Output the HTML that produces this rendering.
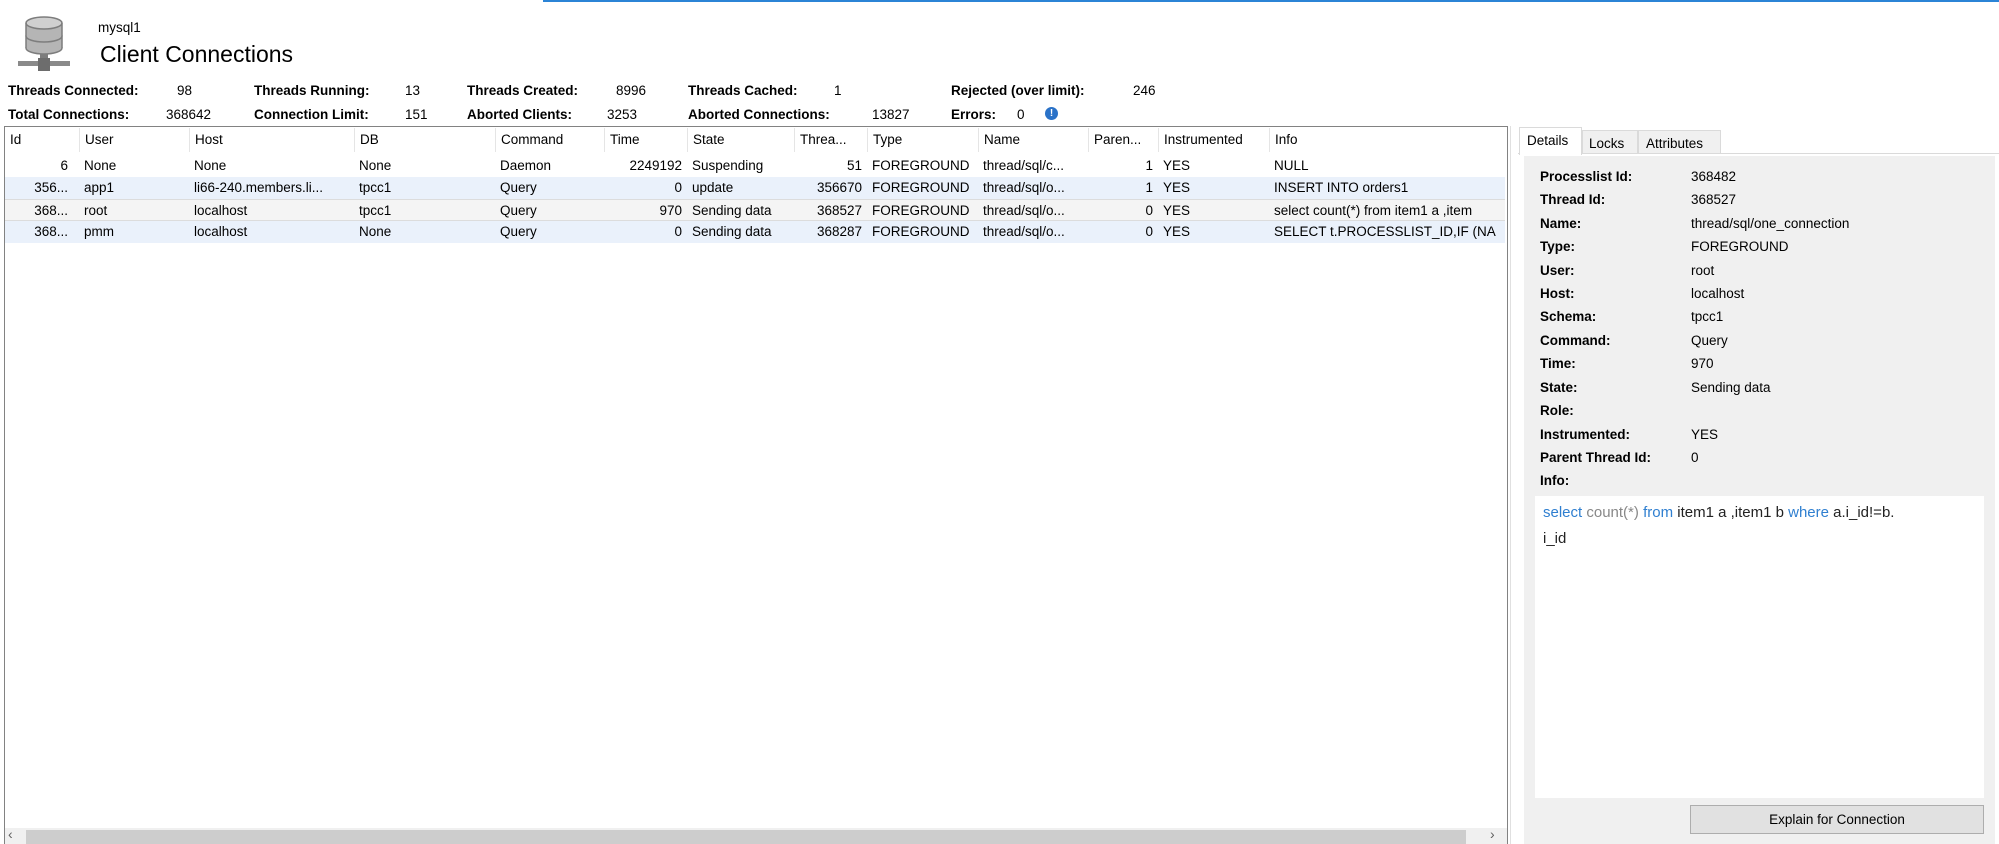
<!DOCTYPE html>
<html><head><meta charset="utf-8"><style>
*{margin:0;padding:0;box-sizing:border-box}
body{width:1999px;height:844px;background:#fff;font-family:"Liberation Sans",sans-serif;font-size:13.5px;color:#000;position:relative;overflow:hidden}
.a{position:absolute;white-space:nowrap}
.b{font-weight:bold}
.hdr span,.row span{position:absolute;top:0;line-height:22px}
.hdr{position:absolute;left:5px;top:128px;width:1500px;height:24px}
.hdr span{line-height:24px;padding-left:5px;border-left:1px solid #e5e5e5}
.row{position:absolute;left:5px;width:1500px;height:22px}
.r{text-align:right}
.lbl{position:absolute;left:1540px;font-weight:bold}
.val{position:absolute;left:1691px}
</style></head><body>
<div class="a" style="left:543px;top:0;width:1456px;height:2px;background:#2b84d6"></div>
<svg class="a" style="left:16px;top:14px" width="58" height="58" viewBox="0 0 58 58">
<g fill="#b5b5b5" stroke="#7d7d7d" stroke-width="1.5">
<ellipse cx="28" cy="34" rx="18" ry="6"/><rect x="10" y="22" width="36" height="12" stroke="none"/>
<ellipse cx="28" cy="22" rx="18" ry="6"/><rect x="10" y="9" width="36" height="13" stroke="none"/>
<ellipse cx="28" cy="9" rx="18" ry="6" fill="#d0d0d0"/></g>
<path d="M10 9v25M46 9v25" stroke="#7d7d7d" stroke-width="1.5"/>
<rect x="24" y="40" width="8" height="8" fill="#7d7d7d"/><rect x="2" y="47" width="52" height="5" fill="#8a8a8a"/><rect x="22" y="44" width="12" height="13" fill="#6d6d6d"/>
</svg>
<div class="a" style="left:98px;top:20px;font-size:13.5px">mysql1</div>
<div class="a" style="left:100px;top:41px;font-size:23px">Client Connections</div>

<div class="a b" style="left:8px;top:83px">Threads Connected:</div><div class="a" style="left:177px;top:83px">98</div>
<div class="a b" style="left:254px;top:83px">Threads Running:</div><div class="a" style="left:405px;top:83px">13</div>
<div class="a b" style="left:467px;top:83px">Threads Created:</div><div class="a" style="left:616px;top:83px">8996</div>
<div class="a b" style="left:688px;top:83px">Threads Cached:</div><div class="a" style="left:834px;top:83px">1</div>
<div class="a b" style="left:951px;top:83px">Rejected (over limit):</div><div class="a" style="left:1133px;top:83px">246</div>
<div class="a b" style="left:8px;top:107px">Total Connections:</div><div class="a" style="left:166px;top:107px">368642</div>
<div class="a b" style="left:254px;top:107px">Connection Limit:</div><div class="a" style="left:405px;top:107px">151</div>
<div class="a b" style="left:467px;top:107px">Aborted Clients:</div><div class="a" style="left:607px;top:107px">3253</div>
<div class="a b" style="left:688px;top:107px">Aborted Connections:</div><div class="a" style="left:872px;top:107px">13827</div>
<div class="a b" style="left:951px;top:107px">Errors:</div><div class="a" style="left:1017px;top:107px">0</div>
<div class="a" style="left:1045px;top:107px;width:13px;height:13px;border-radius:50%;background:#2a72c8;color:#fff;font-size:10px;font-weight:bold;text-align:center;line-height:13px">!</div>

<div class="a" style="left:4px;top:126px;width:1504px;height:718px;border:1px solid #828282;border-bottom:none"></div>
<div class="hdr">
<span style="left:0;border:none">Id</span><span style="left:74px">User</span><span style="left:184px">Host</span><span style="left:349px">DB</span><span style="left:490px">Command</span><span style="left:599px">Time</span><span style="left:682px">State</span><span style="left:789px">Threa...</span><span style="left:862px">Type</span><span style="left:973px">Name</span><span style="left:1083px">Paren...</span><span style="left:1153px">Instrumented</span><span style="left:1264px">Info</span>
</div>
<div class="row" style="top:155px">
<span class="r" style="left:0;width:63px">6</span><span style="left:79px">None</span><span style="left:189px">None</span><span style="left:354px">None</span><span style="left:495px">Daemon</span><span class="r" style="left:599px;width:78px">2249192</span><span style="left:687px">Suspending</span><span class="r" style="left:789px;width:68px">51</span><span style="left:867px">FOREGROUND</span><span style="left:978px">thread/sql/c...</span><span class="r" style="left:1083px;width:65px">1</span><span style="left:1158px">YES</span><span style="left:1269px">NULL</span>
</div>
<div class="row" style="top:177px;background:#eaf1fb">
<span class="r" style="left:0;width:63px">356...</span><span style="left:79px">app1</span><span style="left:189px">li66-240.members.li...</span><span style="left:354px">tpcc1</span><span style="left:495px">Query</span><span class="r" style="left:599px;width:78px">0</span><span style="left:687px">update</span><span class="r" style="left:789px;width:68px">356670</span><span style="left:867px">FOREGROUND</span><span style="left:978px">thread/sql/o...</span><span class="r" style="left:1083px;width:65px">1</span><span style="left:1158px">YES</span><span style="left:1269px">INSERT INTO orders1</span>
</div>
<div class="row" style="top:199px;background:#f4f4f4;border-top:1px solid #dcdcdc;border-bottom:1px solid #dcdcdc">
<span class="r" style="left:0;width:63px">368...</span><span style="left:79px">root</span><span style="left:189px">localhost</span><span style="left:354px">tpcc1</span><span style="left:495px">Query</span><span class="r" style="left:599px;width:78px">970</span><span style="left:687px">Sending data</span><span class="r" style="left:789px;width:68px">368527</span><span style="left:867px">FOREGROUND</span><span style="left:978px">thread/sql/o...</span><span class="r" style="left:1083px;width:65px">0</span><span style="left:1158px">YES</span><span style="left:1269px">select count(*) from item1 a ,item</span>
</div>
<div class="row" style="top:221px;background:#eaf1fb">
<span class="r" style="left:0;width:63px">368...</span><span style="left:79px">pmm</span><span style="left:189px">localhost</span><span style="left:354px">None</span><span style="left:495px">Query</span><span class="r" style="left:599px;width:78px">0</span><span style="left:687px">Sending data</span><span class="r" style="left:789px;width:68px">368287</span><span style="left:867px">FOREGROUND</span><span style="left:978px">thread/sql/o...</span><span class="r" style="left:1083px;width:65px">0</span><span style="left:1158px">YES</span><span style="left:1269px">SELECT t.PROCESSLIST_ID,IF (NA</span>
</div>
<div class="a" style="left:5px;top:828px;width:1502px;height:16px;background:#f0f0f0"></div>
<div class="a" style="left:26px;top:830px;width:1440px;height:14px;background:#cdcdcd"></div>
<div class="a" style="left:8px;top:826px;color:#606060;font-size:14px">‹</div>
<div class="a" style="left:1490px;top:826px;color:#606060;font-size:14px">›</div>

<div class="a" style="left:1510px;top:126px;width:1px;height:718px;background:#e0e0e0"></div>
<div class="a" style="left:1518px;top:153px;width:481px;height:691px;background:#fff;border-top:1px solid #dadada"></div>
<div class="a" style="left:1524px;top:156px;width:471px;height:688px;background:#f0f0f0"></div>
<div class="a" style="left:1519px;top:127px;width:63px;height:28px;background:#fff;border:1px solid #dadada;border-bottom:none;padding:5px 0 0 7px">Details</div>
<div class="a" style="left:1582px;top:130px;width:56px;height:24px;background:#f0f0f0;border:1px solid #dadada;padding:5px 0 0 6px">Locks</div>
<div class="a" style="left:1638px;top:130px;width:83px;height:24px;background:#f0f0f0;border:1px solid #dadada;padding:5px 0 0 7px">Attributes</div>

<div class="lbl" style="top:169px">Processlist Id:</div><div class="val" style="top:169px">368482</div>
<div class="lbl" style="top:192px">Thread Id:</div><div class="val" style="top:192px">368527</div>
<div class="lbl" style="top:216px">Name:</div><div class="val" style="top:216px">thread/sql/one_connection</div>
<div class="lbl" style="top:239px">Type:</div><div class="val" style="top:239px">FOREGROUND</div>
<div class="lbl" style="top:263px">User:</div><div class="val" style="top:263px">root</div>
<div class="lbl" style="top:286px">Host:</div><div class="val" style="top:286px">localhost</div>
<div class="lbl" style="top:309px">Schema:</div><div class="val" style="top:309px">tpcc1</div>
<div class="lbl" style="top:333px">Command:</div><div class="val" style="top:333px">Query</div>
<div class="lbl" style="top:356px">Time:</div><div class="val" style="top:356px">970</div>
<div class="lbl" style="top:380px">State:</div><div class="val" style="top:380px">Sending data</div>
<div class="lbl" style="top:403px">Role:</div>
<div class="lbl" style="top:427px">Instrumented:</div><div class="val" style="top:427px">YES</div>
<div class="lbl" style="top:450px">Parent Thread Id:</div><div class="val" style="top:450px">0</div>
<div class="lbl" style="top:473px">Info:</div>
<div class="a" style="left:1535px;top:496px;width:449px;height:302px;background:#fff;padding:4px 8px;font-size:15px;line-height:26px;white-space:normal;color:#222"><span style="color:#2f7fd0">select</span> <span style="color:#888">count(*)</span> <span style="color:#2f7fd0">from</span> item1 a ,item1 b <span style="color:#2f7fd0">where</span> a.i_id!=b.<br>i_id</div>
<div class="a" style="left:1690px;top:805px;width:294px;height:29px;background:#e1e1e1;border:1px solid #adadad;text-align:center;line-height:27px">Explain for Connection</div>
</body></html>
